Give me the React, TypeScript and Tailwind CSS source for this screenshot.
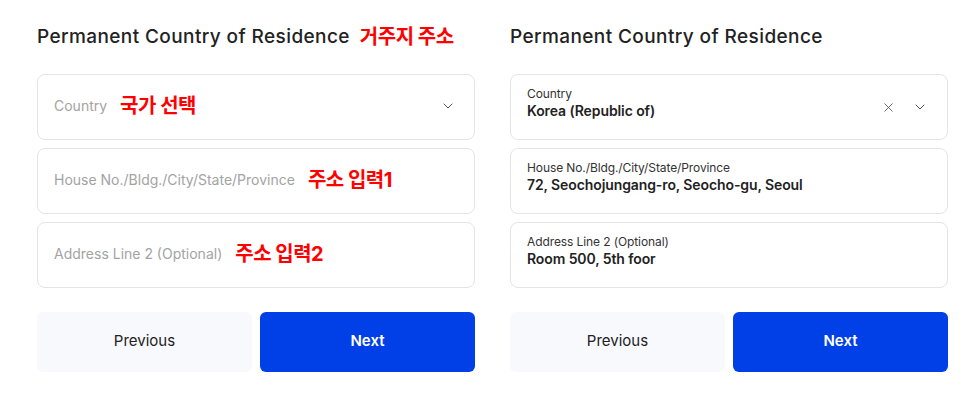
import { X, ChevronDown } from 'lucide-react';

const font = { fontFamily: 'Inter, "Noto Sans CJK KR", sans-serif' };

function Hint({ text }: { text: string }) {
  return <span className="text-[20px] font-bold text-[#ff0000] tracking-[-0.5px]">{text}</span>;
}

function EmptyField({ label, hint, chevron }: { label: string; hint: string; chevron?: boolean }) {
  return (
    <div className="h-[66px] rounded-lg border border-[#e4e4e4] bg-white px-4 pb-[3px] flex items-center">
      <span className="text-[14px] text-[#a3a3a3]">{label}</span>
      <span className="ml-[13px]">
        <Hint text={hint} />
      </span>
      {chevron && <ChevronDown className="ml-auto mr-[2px] text-[#555]" size={16} strokeWidth={1.5} />}
    </div>
  );
}

function FilledField({ label, value, select }: { label: string; value: string; select?: boolean }) {
  return (
    <div className="h-[66px] rounded-lg border border-[#e4e4e4] bg-white px-4 pb-[9px] flex items-center">
      <div className="flex flex-col">
        <span className="text-[12px] leading-[15px] text-[#333] tracking-[-0.1px]">{label}</span>
        <span className="text-[14px] leading-[19px] font-semibold text-[#222] tracking-[-0.1px]">{value}</span>
      </div>
      {select && (
        <div className="ml-auto mr-[3px] mt-[9px] flex items-center gap-[16px] text-[#555]">
          <X size={15} strokeWidth={1.4} />
          <ChevronDown size={16} strokeWidth={1.5} />
        </div>
      )}
    </div>
  );
}

function Buttons() {
  return (
    <div className="mt-[24px] grid grid-cols-2 gap-2">
      <button className="h-[60px] rounded-md bg-[#f8f9fd] pb-[2px] text-[15px] text-[#222]">Previous</button>
      <button className="h-[60px] rounded-md bg-[#0040e6] pb-[2px] text-[15px] font-semibold text-white">Next</button>
    </div>
  );
}

export default function App() {
  return (
    <div className="w-[980px] h-[400px] bg-white flex gap-[35px] pl-[37px] pt-[23px]" style={font}>
      <div className="w-[438px]">
        <div className="flex items-center h-[28px] mb-[23px]">
          <h2 className="text-[19px] font-medium text-[#222] tracking-[0.4px]">Permanent Country of Residence</h2>
          <span className="ml-[10px]">
            <Hint text="거주지 주소" />
          </span>
        </div>
        <div className="flex flex-col gap-[8px]">
          <EmptyField label="Country" hint="국가 선택" chevron />
          <EmptyField label="House No./Bldg./City/State/Province" hint="주소 입력1" />
          <EmptyField label="Address Line 2 (Optional)" hint="주소 입력2" />
        </div>
        <Buttons />
      </div>
      <div className="w-[438px]">
        <div className="flex items-center h-[28px] mb-[23px]">
          <h2 className="text-[19px] font-medium text-[#222] tracking-[0.4px]">Permanent Country of Residence</h2>
        </div>
        <div className="flex flex-col gap-[8px]">
          <FilledField label="Country" value="Korea (Republic of)" select />
          <FilledField label="House No./Bldg./City/State/Province" value="72, Seochojungang-ro, Seocho-gu, Seoul" />
          <FilledField label="Address Line 2 (Optional)" value="Room 500, 5th foor" />
        </div>
        <Buttons />
      </div>
    </div>
  );
}
